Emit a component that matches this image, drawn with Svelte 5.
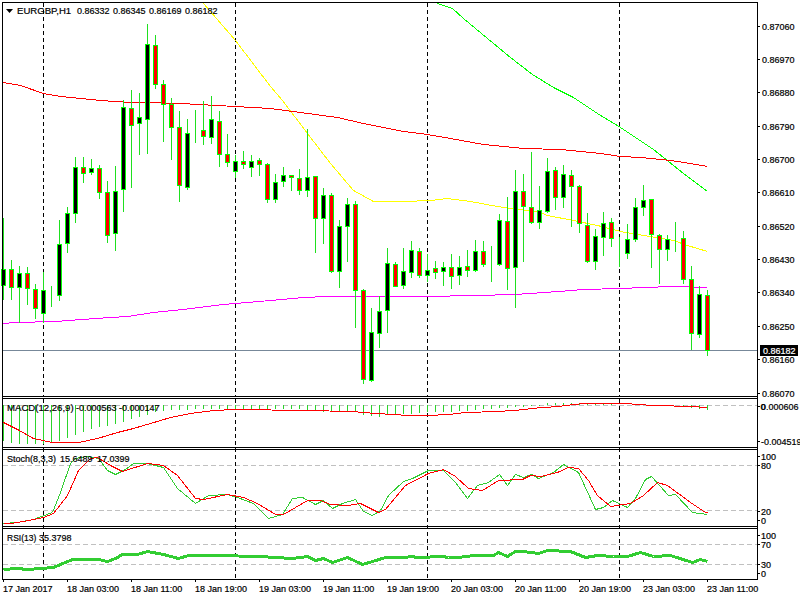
<script lang="ts">
  // high, body top, body bottom, low (in pixels), colour of the body
  const K = '#000';
  const R = '#f00';
  const raw: [number, number, number, number, string][] = [
    [218, 269, 285, 300, K], [260, 269, 287, 300, R], [266, 273, 287, 323, K], [267, 273, 288, 305, R],
    [284, 289, 308, 319, R], [272, 290, 313, 323, K], [286, 293, 293, 307, K], [220, 244, 295, 301, K],
    [207, 213, 243, 253, K], [157, 167, 213, 223, K], [157, 167, 173, 183, R], [159, 168, 172, 175, K],
    [165, 168, 192, 199, R], [181, 192, 235, 243, R], [166, 191, 233, 251, K], [100, 107, 189, 212, K],
    [90, 108, 125, 188, R], [93, 117, 123, 155, K], [24, 44, 119, 154, K], [35, 45, 84, 89, R],
    [80, 84, 104, 142, R], [98, 104, 127, 160, R], [111, 127, 185, 202, R], [119, 133, 187, 190, K],
    [110, 132, 132, 143, K], [101, 130, 136, 145, R], [96, 119, 137, 144, K], [111, 121, 154, 167, R],
    [134, 154, 162, 167, R], [155, 161, 171, 178, K], [151, 161, 164, 169, R], [155, 161, 167, 177, K],
    [158, 160, 164, 176, R], [163, 164, 199, 203, R], [174, 182, 199, 203, K], [167, 175, 181, 187, K],
    [175, 175, 177, 191, R], [169, 178, 190, 195, R], [129, 177, 190, 197, K], [176, 176, 218, 253, R],
    [188, 195, 218, 244, K], [193, 195, 271, 273, R], [220, 226, 271, 288, K], [198, 204, 226, 262, K],
    [201, 204, 290, 328, R], [289, 290, 379, 384, R], [308, 332, 380, 382, K], [296, 311, 333, 348, K],
    [248, 263, 310, 333, K], [262, 264, 286, 287, R], [248, 271, 285, 289, K], [241, 250, 272, 278, K],
    [248, 251, 275, 278, R], [254, 270, 275, 282, K], [261, 268, 272, 279, R], [262, 267, 271, 286, K],
    [254, 267, 276, 289, R], [256, 267, 275, 285, K], [250, 266, 270, 277, R], [240, 251, 270, 272, K],
    [241, 251, 264, 267, R], [246, 263, 263, 282, K], [214, 220, 264, 266, K], [197, 221, 268, 290, R],
    [170, 191, 267, 308, K], [174, 191, 206, 262, R], [152, 207, 222, 224, R], [186, 210, 222, 229, K],
    [158, 171, 211, 213, K], [167, 170, 197, 210, R], [165, 174, 197, 208, K], [170, 175, 186, 227, R],
    [185, 186, 223, 233, R], [213, 225, 261, 263, R], [229, 236, 261, 270, K], [212, 223, 237, 256, K],
    [218, 222, 238, 247, R], [237, 252, 252, 267, K], [224, 239, 253, 259, K], [198, 207, 239, 242, K],
    [185, 200, 207, 216, K], [199, 199, 234, 268, R], [234, 235, 249, 284, R], [235, 239, 249, 261, K],
    [222, 240, 240, 252, K], [231, 238, 279, 284, R], [266, 279, 333, 350, R], [286, 294, 334, 338, K],
    [290, 295, 350, 356, R]
  ];
  const candles = raw.map(([high, top, bottom, low, fill], i) => ({ x: 3 + 8 * i, high, top, bottom, low, fill }));

  const macdBars = [
    441, 443, 444, 444, 444, 444, 442, 441, 438, 435, 432, 429, 427, 426, 424, 422, 419, 417, 415, 412, 411, 410, 410,
    410, 409, 409, 409, 409, 409, 409, 409, 409, 409, 409, 409, 409, 409, 409, 410, 410, 412, 412, 411, 411, 412, 415,
    416, 417, 415, 414, 414, 414, 413, 412, 412, 412, 412, 411, 411, 410, 409, 409, 408, 408, 407, 407, 406, 406, 403,
    403, 403, 403, 403, 403, 404, 404, 404, 405, 405, 405, 405, 405, 405, 405, 405, 406, 408, 409, 410
  ];

  const ma = {
    red: [[3,82],[20,85],[43,93],[60,96],[100,100],[130,102],[150,102],[180,103],[235,106],[270,108],[300,112],[337,117],[363,123],[403,131],[427,134],[450,138],[483,144],[523,148],[560,149],[600,153],[620,156],[640,157],[670,160],[690,163],[707,166]],
    yellow: [[203,3],[235,40],[270,86],[282,100],[307,133],[330,163],[353,190],[373,201],[403,201],[430,200],[447,198],[470,201],[497,206],[540,212],[547,215],[573,220],[597,225],[620,231],[643,235],[673,240],[687,245],[707,251]],
    green: [[437,3],[452,8],[463,18],[487,38],[510,57],[532,74],[553,87],[573,97],[597,113],[620,127],[653,149],[663,157],[683,173],[707,191]],
    magenta: [[3,323],[15,322],[55,321],[95,318],[127,316],[153,312],[183,309],[223,304],[270,300],[303,297],[327,296],[423,296],[477,295],[513,294],[530,293],[558,291],[583,289],[620,288],[643,287],[673,286],[707,287]]
  };
  const macdSignal = [[3,422],[17,429],[33,438],[52,442],[78,442],[97,438],[117,432],[133,428],[150,423],[170,417],[190,413],[213,410],[235,409],[305,410],[352,411],[375,413],[393,414],[408,415],[428,415],[448,414],[465,412],[498,411],[525,409],[530,408],[557,406],[583,403],[630,403],[633,404],[657,405],[690,406],[707,407]];
  const stochMain = [[3,523],[17,522],[33,519],[52,512],[60,492],[70,463],[75,458],[87,456],[98,458],[107,470],[115,474],[125,469],[133,463],[147,463],[163,467],[177,488],[195,503],[208,495],[227,494],[237,497],[253,503],[268,518],[282,514],[292,498],[302,497],[315,504],[323,500],[332,508],[342,503],[355,499],[363,511],[372,515],[380,510],[388,495],[403,481],[412,478],[428,470],[443,470],[455,482],[467,498],[477,485],[488,482],[499,474],[507,485],[515,474],[523,477],[531,474],[538,478],[553,472],[563,464],[578,472],[595,509],[603,507],[612,500],[627,507],[635,498],[645,479],[651,476],[668,495],[675,494],[692,512],[707,514]];
  const stochSignal = [[3,523],[10,523],[23,521],[43,517],[53,513],[67,495],[78,470],[90,458],[97,457],[110,465],[122,471],[147,463],[163,465],[177,475],[195,498],[203,499],[227,494],[243,497],[257,503],[275,514],[283,514],[307,500],[320,500],[330,504],[347,505],[360,503],[378,512],[385,509],[405,485],[428,473],[443,469],[455,476],[468,488],[482,490],[498,480],[522,479],[530,475],[540,476],[557,472],[568,467],[578,468],[588,480],[597,495],[610,506],[630,503],[643,495],[657,482],[667,485],[690,502],[705,512],[707,512]];
  const rsi = [[3,569],[17,568],[27,569],[40,568],[53,567],[72,559],[98,559],[107,561],[115,558],[122,554],[137,554],[147,551],[163,554],[178,558],[188,555],[215,555],[260,556],[275,557],[292,558],[307,556],[315,560],[323,558],[332,562],[347,557],[362,564],[372,561],[385,557],[405,557],[410,556],[418,557],[442,556],[448,557],[458,557],[473,555],[493,555],[498,552],[507,556],[515,551],[523,551],[538,553],[547,550],[570,551],[585,557],[597,555],[613,556],[627,556],[640,552],[653,556],[670,555],[692,562],[700,559],[707,561]];

  // the axis labels sit on their tick, y is the centre of the text
  const priceLabels = [
    ['0.87060', 26], ['0.86970', 59], ['0.86880', 92], ['0.86790', 126], ['0.86700', 159], ['0.86610', 192],
    ['0.86520', 226], ['0.86430', 259], ['0.86340', 292], ['0.86250', 326], ['0.86160', 359], ['0.86070', 393]
  ];

  const panes = [
    { id: 'main', top: 0, height: 397, borders: [2, 396], levels: [], labelX: 762, labels: priceLabels },
    { id: 'macd', top: 397, height: 51, borders: [398, 447], levels: [405], labelX: 761, labels: [['0.000606', 406], ['-0.004519', 441]] },
    { id: 'stoch', top: 448, height: 79, borders: [449, 526], levels: [465, 510], labelX: 761, labels: [['100', 456], ['80', 465], ['20', 511], ['0', 520]] },
    { id: 'rsi', top: 527, height: 53, borders: [528, 579], levels: [544, 564], labelX: 761, labels: [['100', 535], ['70', 544], ['30', 564], ['0', 573]] }
  ];

  const sessions = [43, 235, 427, 619];
  const times = [
    '17 Jan 2017', '18 Jan 03:00', '18 Jan 11:00', '18 Jan 19:00', '19 Jan 03:00', '19 Jan 11:00',
    '19 Jan 19:00', '20 Jan 03:00', '20 Jan 11:00', '20 Jan 19:00', '23 Jan 03:00', '23 Jan 11:00'
  ];

  const points = (line: number[][]) => line.map(([x, y]) => `${x + 0.5},${y + 0.5}`).join(' ');
</script>

<div class="chart">
  {#each panes as pane}
    <svg class="pane" width="800" height={pane.height} viewBox="0 {pane.top} 800 {pane.height}">
      {#each pane.levels as y}
        <line class="level" x1="3" x2="757" y1={y + 0.5} y2={y + 0.5} />
      {/each}
      {#each sessions as x}
        <line
          class="session"
          x1={x + 0.5}
          x2={x + 0.5}
          y1={Math.max(pane.top, 3)}
          y2={pane.top + pane.height}
          stroke-dashoffset={pane.top}
        />
      {/each}

      {#if pane.id === 'main'}
        <line class="bid" x1="3" x2="757" y1="350.5" y2="350.5" />
        <polyline class="ma" stroke="#ff00ff" points={points(ma.magenta)} />
        <polyline class="ma" stroke="#ffff00" points={points(ma.yellow)} />
        <polyline class="ma" stroke="#00ff00" points={points(ma.green)} />
        <polyline class="ma" stroke="#ff0000" points={points(ma.red)} />
        {#each candles as c}
          <line class="wick" x1={c.x + 0.5} x2={c.x + 0.5} y1={c.high} y2={c.low} />
          <rect class="body" x={c.x - 1.5} y={c.top + 0.5} width="4" height={c.bottom - c.top} fill={c.fill} />
        {/each}
        <polygon points="6,9 13,9 9.5,13" />
        <text class="name" x="17" y="14">EURGBP,H1</text>
        <text x="77" y="14">0.86332</text>
        <text x="113" y="14">0.86345</text>
        <text x="149" y="14">0.86169</text>
        <text x="185" y="14">0.86182</text>
      {:else if pane.id === 'macd'}
        {#each macdBars as y, i}
          <line class="bar" x1={3.5 + 8 * i} x2={3.5 + 8 * i} y1="405" y2={y} />
        {/each}
        <polyline class="ma" stroke="#ff0000" points={points(macdSignal)} />
        <text class="name" x="7" y="411">MACD(12,26,9)</text>
        <text x="76" y="411">-0.000563</text>
        <text x="119" y="411">-0.000147</text>
        <text x="760.5" y="410">0</text>
      {:else if pane.id === 'stoch'}
        <polyline class="ma" stroke="#32cd32" points={points(stochMain)} />
        <polyline class="ma" stroke="#ff0000" points={points(stochSignal)} />
        <text x="7" y="462">Stoch(8,3,3)</text>
        <text x="60" y="462">15.6489</text>
        <text x="97" y="462">17.0399</text>
      {:else}
        <polyline class="ma thick" stroke="#32cd32" points={points(rsi)} />
        <text class="short" x="7" y="541">RSI(13)</text>
        <text x="39" y="541">35.3798</text>
      {/if}

      {#each pane.borders as y}
        <line class="frame" x1="2" x2="758" y1={y + 0.5} y2={y + 0.5} />
      {/each}
      <line class="frame" x1="2.5" x2="2.5" y1={Math.max(pane.top, 2)} y2={pane.top + pane.height} />
      <line class="frame" x1="757.5" x2="757.5" y1={Math.max(pane.top, 2)} y2={pane.top + pane.height} />

      {#each pane.labels as [label, y]}
        <line class="frame" x1="758" x2="760" y1={+y + 0.5} y2={+y + 0.5} />
        <text x={pane.labelX} y={+y + 3.5}>{label}</text>
      {/each}

      {#if pane.id === 'main'}
        <rect x="760" y="345" width="38" height="11" fill="#000" />
        <text class="bid-text" x="763" y="354">0.86182</text>
      {/if}
    </svg>
  {/each}

  <div class="time-axis">
    {#each times as time}
      <span class="time">{time}</span>
    {/each}
  </div>
</div>

<style>
  :global(body) {
    margin: 0;
    background: #fff;
  }
  .chart {
    width: 800px;
    height: 600px;
    overflow: hidden;
    background: #fff;
    font-family: "Liberation Sans", Arial, sans-serif;
    font-size: 9px;
    color: #000;
  }
  .pane {
    display: block;
    overflow: visible;
  }
  .pane text {
    font-family: "Liberation Sans", Arial, sans-serif;
    font-size: 9px;
    fill: #000;
    stroke: #000;
    stroke-width: 0.2px;
  }
  .pane .name {
    font-size: 9.6px;
  }
  .pane .short {
    font-size: 8.5px;
  }
  .pane .bid-text {
    fill: #fff;
    stroke: #fff;
  }
  .pane line,
  .pane polyline,
  .pane rect {
    shape-rendering: crispEdges;
  }
  .frame {
    stroke: #000;
    stroke-width: 1;
  }
  .session {
    stroke: #000;
    stroke-width: 1;
    stroke-dasharray: 4 3;
  }
  .level {
    stroke: #c0c0c0;
    stroke-width: 1;
    stroke-dasharray: 5 3;
  }
  .bid {
    stroke: #778899;
    stroke-width: 1;
  }
  .ma {
    fill: none;
    stroke-width: 1;
  }
  .thick {
    stroke-width: 3;
  }
  .wick {
    stroke: #1fe01f;
    stroke-width: 1;
  }
  .body {
    stroke: #00ff00;
    stroke-width: 1;
  }
  .bar {
    stroke: #2bd42b;
    stroke-width: 1;
  }
  .time-axis {
    display: flex;
    padding-left: 3px;
    height: 20px;
  }
  .time {
    box-sizing: border-box;
    flex: 0 0 64px;
    position: relative;
    padding-top: 4px;
    line-height: 11px;
    white-space: nowrap;
    -webkit-text-stroke: 0.2px #000;
  }
  .time::before {
    content: "";
    position: absolute;
    left: 0;
    top: 0;
    width: 1px;
    height: 2px;
    background: #000;
  }
</style>
